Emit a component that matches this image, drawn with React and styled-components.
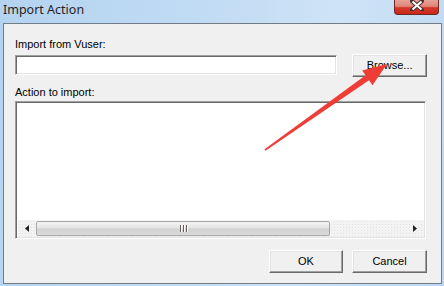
import React from "react";
import styled, { createGlobalStyle } from "styled-components";

const Global = createGlobalStyle`
  html, body { margin: 0; padding: 0; }
  body { width: 444px; height: 286px; overflow: hidden; }
`;

const Window = styled.div`
  position: relative;
  width: 444px;
  height: 286px;
  box-sizing: border-box;
  padding: 0 2px 2px 3px;
  display: flex;
  flex-direction: column;
  background: linear-gradient(100deg, #b4d3f0 0%, #c2dcf4 45%, #cfe3f6 70%, #bcd8f2 100%);
  font-family: "Liberation Sans", Arial, sans-serif;
`;

const TitleBar = styled.div`
  height: 23px;
  display: flex;
  justify-content: space-between;
  align-items: flex-start;
`;

const Title = styled.div`
  font-family: "Noto Sans", "DejaVu Sans", sans-serif;
  font-size: 12.5px;
  line-height: 20px;
  color: #2a1c1c;
`;

const CloseBtn = styled.div`
  width: 43px;
  height: 14px;
  margin-right: 3px;
  border: 1px solid #6b2b24;
  border-top: none;
  border-radius: 0 0 4px 4px;
  background: linear-gradient(#e8a296 0%, #df8678 45%, #d6382c 55%, #c9261c 100%);
  display: flex;
  justify-content: center;
  align-items: flex-start;
`;

const Client = styled.div`
  flex: 1;
  border: 1px solid #707c88;
  background: #f0f0f0;
  padding: 14px 14px 0 11px;
  display: flex;
  flex-direction: column;
`;

const Label = styled.div`
  font-size: 11px;
  line-height: 12px;
  color: #000;
  margin-top: ${(p) => p.$mt || 0}px;
  margin-bottom: ${(p) => p.$mb}px;
`;

const Row = styled.div`
  display: flex;
  align-items: flex-start;
  gap: ${(p) => p.$gap}px;
  justify-content: ${(p) => p.$justify || "flex-start"};
`;

const Sunken = styled.div`
  box-sizing: border-box;
  background: #fff;
  border-style: solid;
  border-width: 1px;
  border-color: #a0a0a0 #fff #fff #a0a0a0;
  box-shadow: inset 1px 1px 0 #696969, inset -1px -1px 0 #e3e3e3;
`;

const Input = styled(Sunken)`
  width: 323px;
  height: 20px;
  margin-top: 1px;
`;

const Button = styled.div`
  box-sizing: border-box;
  width: ${(p) => p.$w}px;
  height: 23px;
  background: #f0f0f0;
  border-style: solid;
  border-width: 1px;
  border-color: #fff #696969 #696969 #fff;
  box-shadow: inset -1px -1px 0 #a0a0a0, inset 1px 1px 0 #e3e3e3;
  display: flex;
  align-items: center;
  justify-content: center;
  font-size: 11px;
  color: #000;
  padding-bottom: 1px;
`;

const ListBox = styled(Sunken)`
  width: 411px;
  height: 138px;
  margin-bottom: 11px;
  display: flex;
  flex-direction: column;
  justify-content: flex-end;
  padding: 2px 1px 1px 2px;
`;

const HScroll = styled.div`
  height: 17px;
  display: flex;
  align-items: stretch;
  background-color: #f3f3f3;
  background-image: radial-gradient(#e2e2e2 0.6px, transparent 0.7px);
  background-size: 3px 3px;
`;

const Arrow = styled.div`
  width: 18px;
  display: flex;
  align-items: center;
  justify-content: center;
`;

const Track = styled.div`
  flex: 1;
  display: flex;
  align-items: center;
`;

const Thumb = styled.div`
  width: 294px;
  height: 15px;
  box-sizing: border-box;
  border: 1px solid #a7a7a7;
  border-radius: 2px;
  background: linear-gradient(#f4f4f4 0%, #e4e4e4 45%, #d2d2d2 55%, #dadada 100%);
  display: flex;
  align-items: center;
  justify-content: center;
`;

const Grip = styled.div`
  display: flex;
  gap: 2px;
  span {
    width: 1px;
    height: 7px;
    background: #6c5c5c;
    box-shadow: 1px 0 0 #fff;
  }
`;

const Overlay = styled.svg`
  position: absolute;
  left: 0;
  top: 0;
  pointer-events: none;
`;

export default function App() {
  return (
    <Window>
      <Global />
      <TitleBar>
        <Title>Import Action</Title>
        <CloseBtn>
          <svg width="14" height="11" viewBox="0 0 14 11">
            <path d="M2 1 L12 10 M12 1 L2 10" stroke="#4a3030" strokeWidth="4" strokeLinecap="square" />
            <path d="M2.5 1.5 L11.5 9.5 M11.5 1.5 L2.5 9.5" stroke="#fff" strokeWidth="2" />
          </svg>
        </CloseBtn>
      </TitleBar>
      <Client>
        <Label $mb={4}>Import from Vuser:</Label>
        <Row $gap={15}>
          <Input />
          <Button $w={75}>Browse...</Button>
        </Row>
        <Label $mt={9} $mb={3}>Action to import:</Label>
        <ListBox>
          <HScroll>
            <Arrow>
              <svg width="4" height="7" viewBox="0 0 4 7"><path d="M4 0 L0 3.5 L4 7 Z" fill="#222" /></svg>
            </Arrow>
            <Track>
              <Thumb>
                <Grip><span /><span /><span /></Grip>
              </Thumb>
            </Track>
            <Arrow>
              <svg width="4" height="7" viewBox="0 0 4 7"><path d="M0 0 L4 3.5 L0 7 Z" fill="#222" /></svg>
            </Arrow>
          </HScroll>
        </ListBox>
        <Row $gap={9} $justify="flex-end">
          <Button $w={74}>OK</Button>
          <Button $w={75}>Cancel</Button>
        </Row>
      </Client>
      <Overlay width="444" height="286" viewBox="0 0 444 286">
        <polygon
          points="265.5,150.7 369,80.3 372.5,85.2 387,64 362.1,70.4 365.6,75.3 264.5,149.3"
          fill="#ee3d36"
        />
      </Overlay>
    </Window>
  );
}
